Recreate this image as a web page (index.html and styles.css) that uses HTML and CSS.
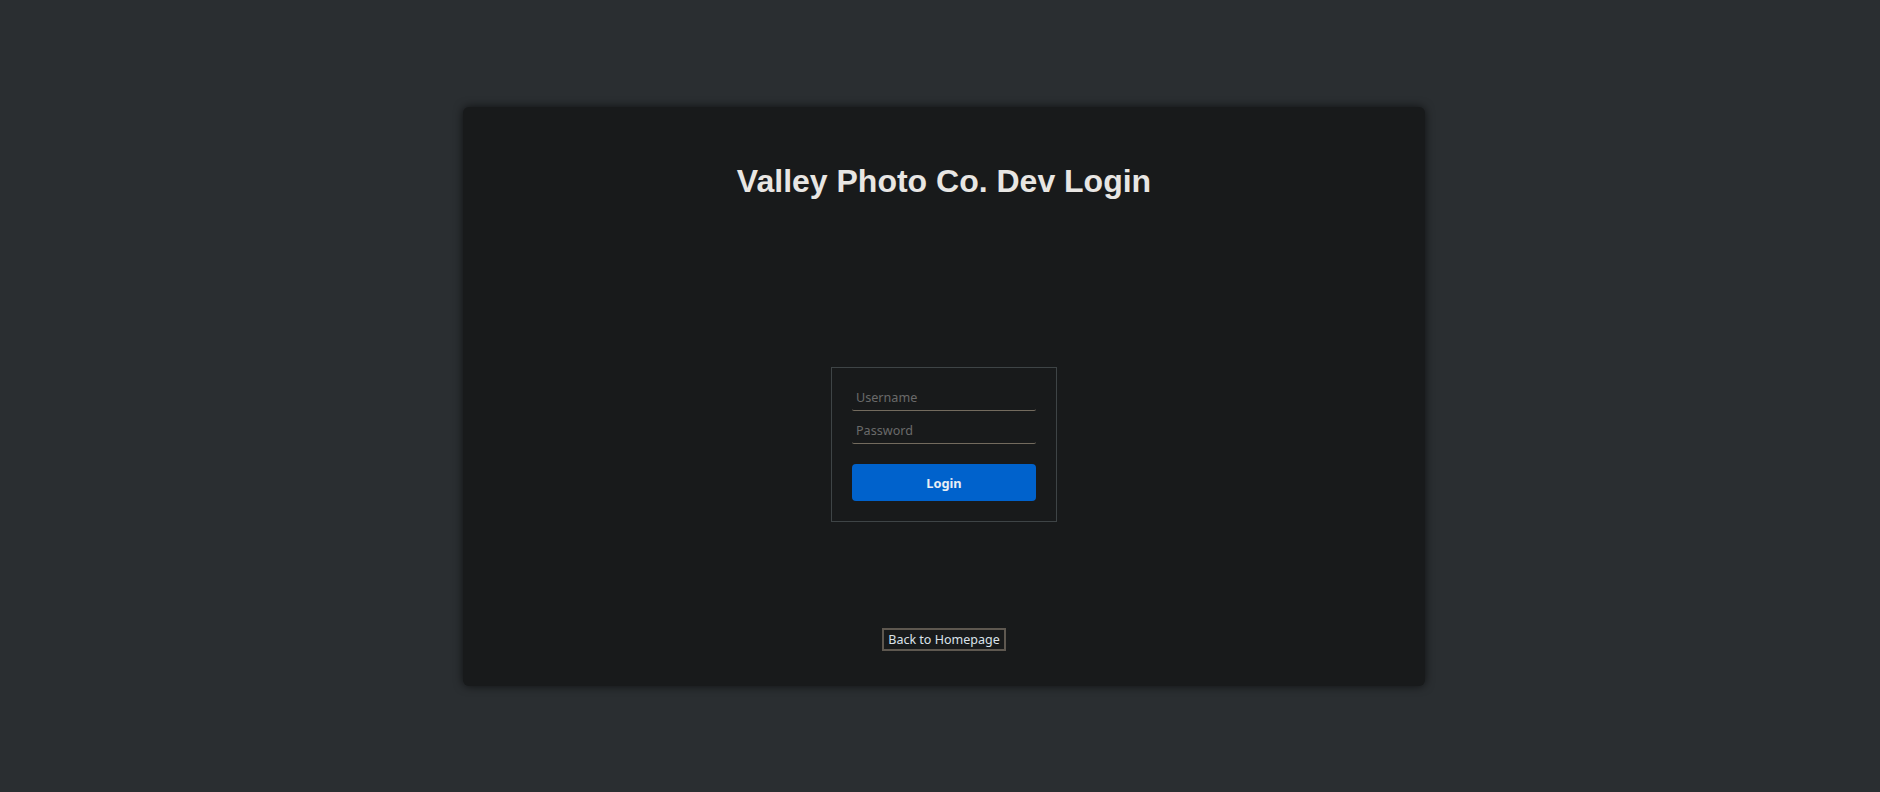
FILE: index.html
```html
<!DOCTYPE html>
<html lang="en">
<head>
<meta charset="utf-8">
<title>Valley Photo Co. Dev Login</title>
<link rel="stylesheet" href="styles.css">
</head>
<body>
<div class="page">
  <main class="card">
    <h1 class="title">Valley Photo Co. Dev Login</h1>
    <form class="login-box">
      <input class="field" type="text" placeholder="Username">
      <input class="field field-gap" type="password" placeholder="Password">
      <button class="login-btn" type="button">Login</button>
    </form>
    <button class="back-btn" type="button">Back to Homepage</button>
  </main>
</div>
</body>
</html>
```
FILE: styles.css
```css
html, body {
  margin: 0;
  padding: 0;
  background: #2a2e31;
  height: 100%;
}
.page {
  display: flex;
  justify-content: center;
  padding: 107px 0 0 8px;
}
.card {
  width: 962px;
  height: 579px;
  box-sizing: border-box;
  background: #181a1b;
  border-radius: 6px;
  box-shadow: 0 0 10px rgba(0, 0, 0, 0.65);
  display: flex;
  flex-direction: column;
  align-items: center;
  padding-top: 56px;
}
.title {
  margin: 0;
  font-family: "Liberation Sans", Arial, sans-serif;
  font-weight: bold;
  font-size: 32px;
  line-height: 37px;
  color: #e8e6e3;
}
.login-box {
  margin-top: 167px;
  width: 226px;
  box-sizing: border-box;
  border: 1px solid #3e4446;
  padding: 20px;
  display: flex;
  flex-direction: column;
}
.field {
  width: 100%;
  box-sizing: border-box;
  margin: 0;
  height: 23px;
  padding: 0 4px 3px;
  border: none;
  border-bottom: 1px solid #736b5e;
  border-radius: 0 0 2px 2px;
  background: transparent;
  font-family: "Noto Sans", sans-serif;
  font-size: 12.6px;
  color: #e8e6e3;
  outline: none;
}
.field::placeholder {
  color: #6a6a6a;
}
.field-gap {
  margin-top: 10px;
}
.login-btn {
  margin-top: 20px;
  height: 37px;
  width: 100%;
  border: none;
  border-radius: 4px;
  background: #0062cc;
  color: #e8eef4;
  font-family: "Noto Sans", sans-serif;
  font-weight: bold;
  font-size: 12.8px;
  cursor: pointer;
}
.back-btn {
  margin-top: 106px;
  height: 23px;
  padding: 0 4px;
  border: 2px solid #5e5850;
  background: transparent;
  color: #dbe2ea;
  font-family: "Noto Sans", sans-serif;
  font-size: 12.5px;
  line-height: 17px;
  cursor: pointer;
}
```
